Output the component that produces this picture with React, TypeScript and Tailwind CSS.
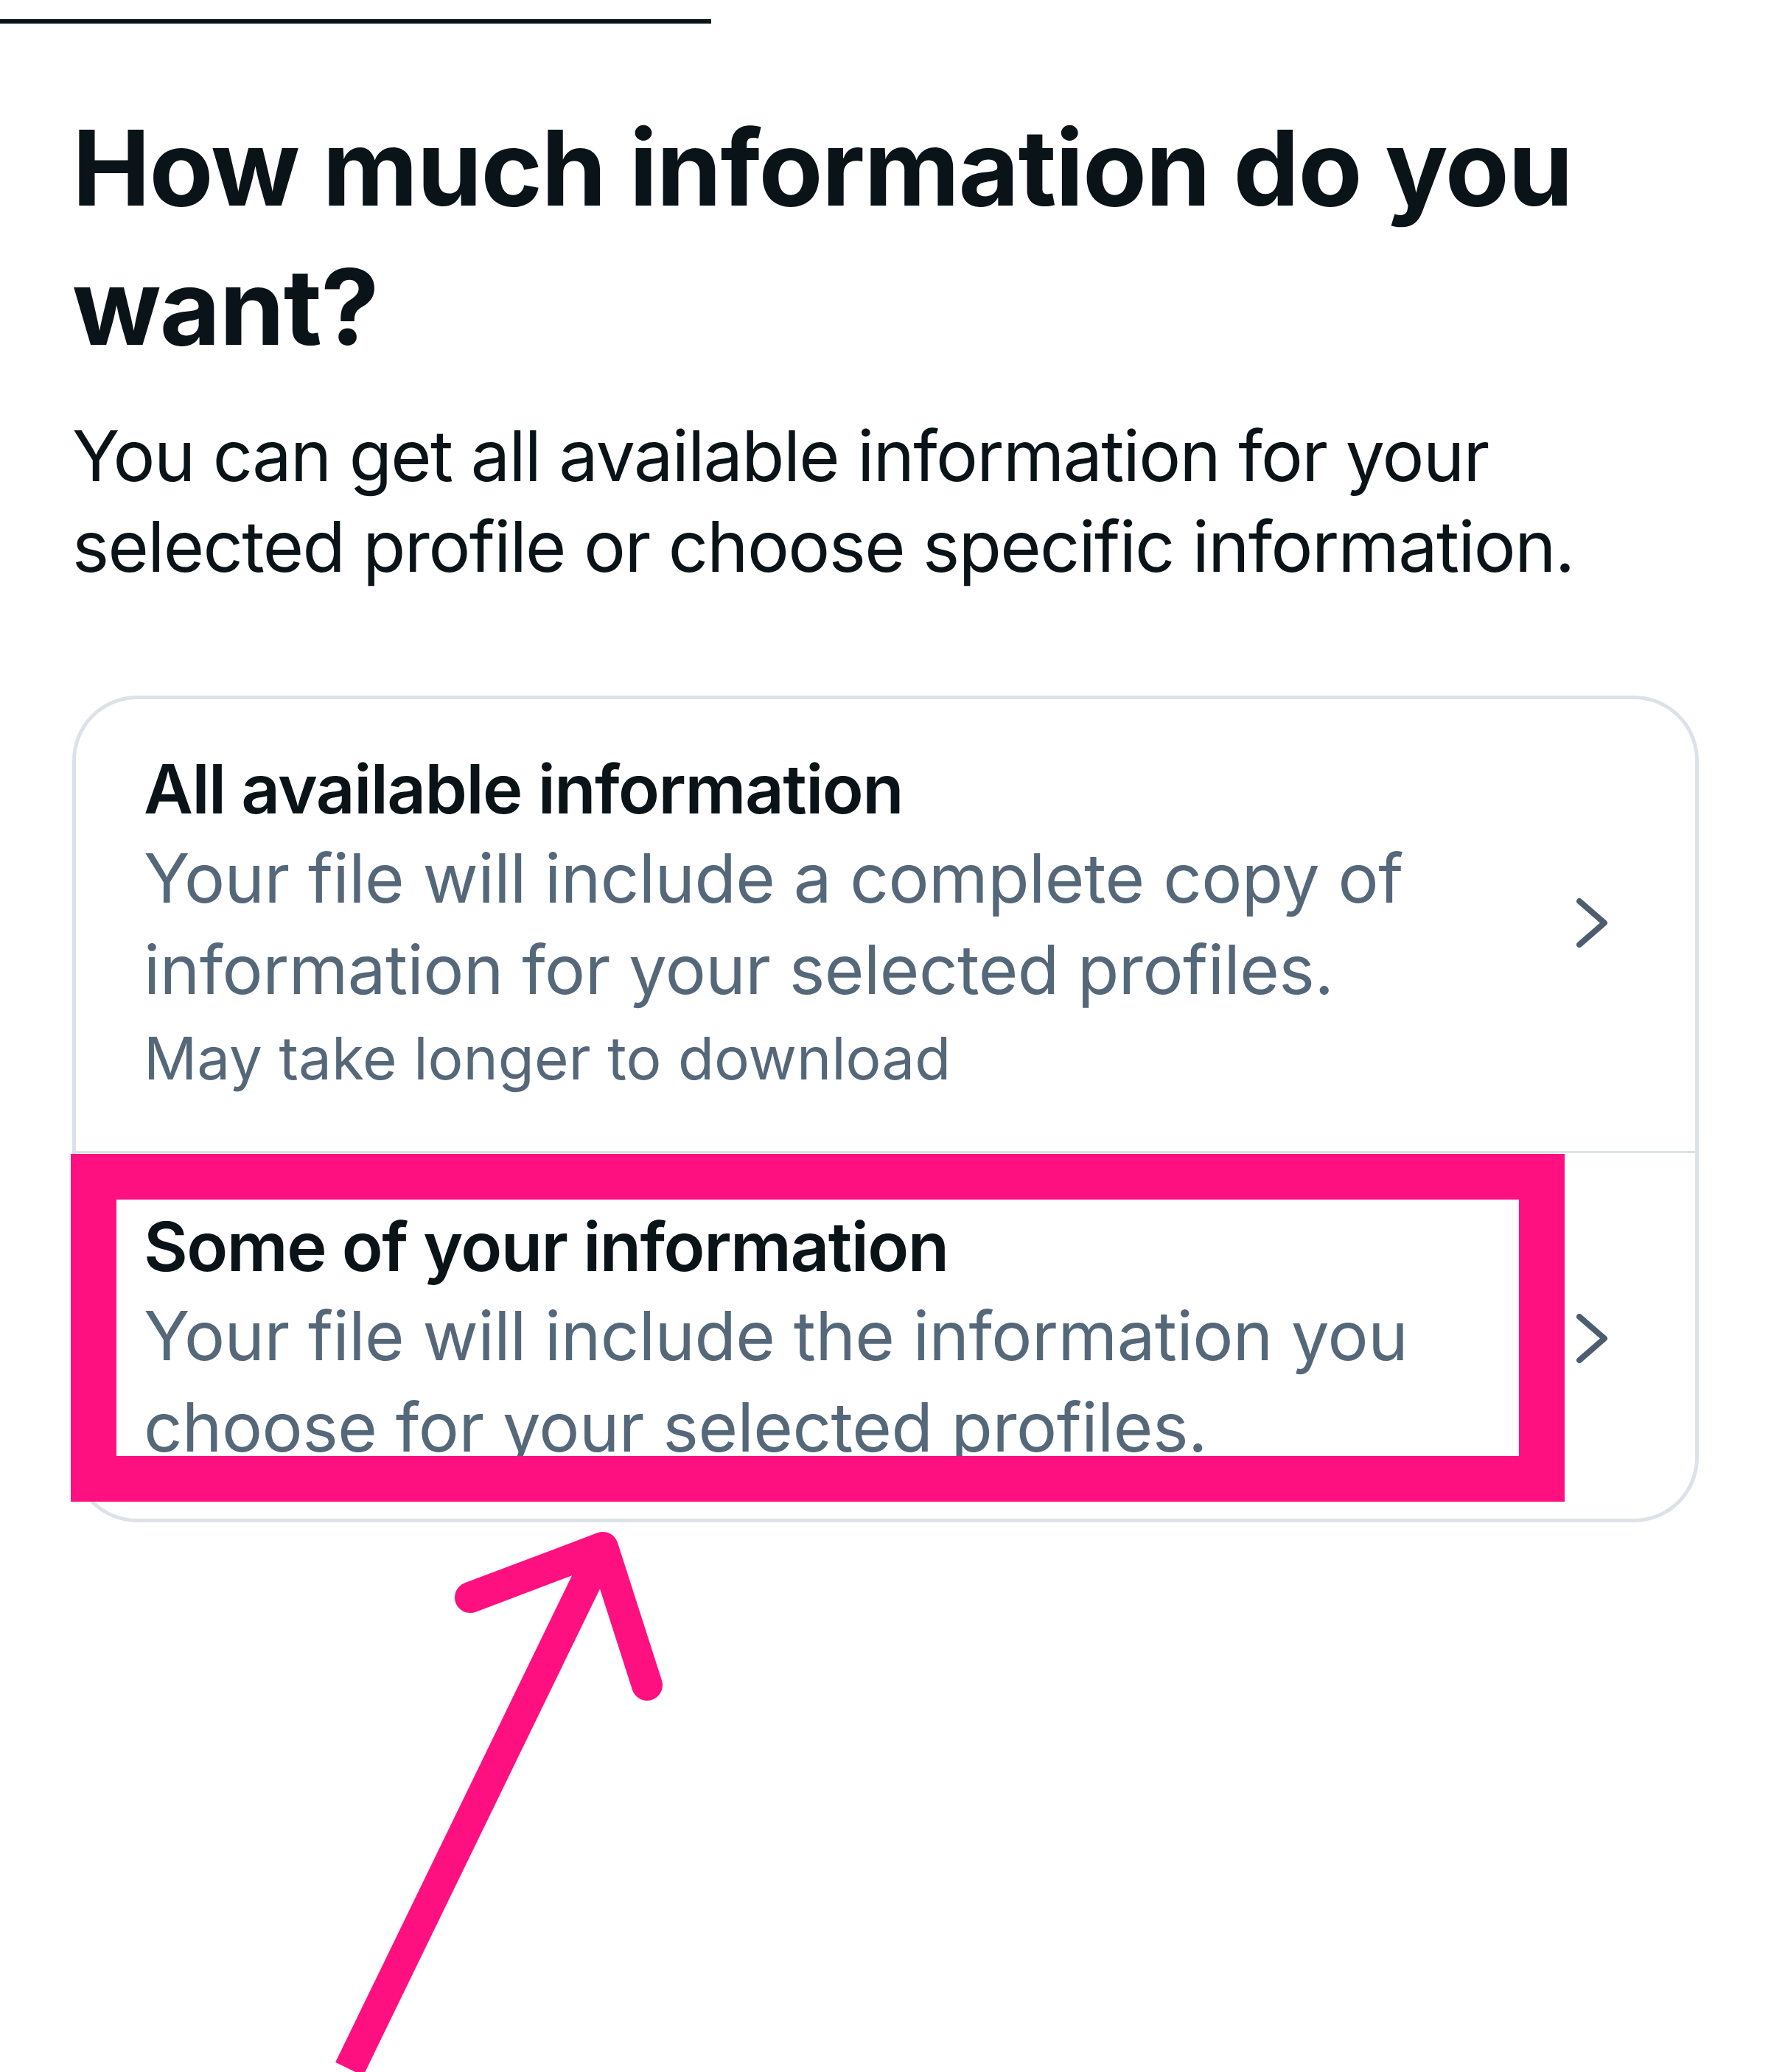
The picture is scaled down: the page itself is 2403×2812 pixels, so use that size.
import React from 'react';

interface Option {
  title: string;
  description: string;
  note?: string;
}

const options: Option[] = [
  {
    title: 'All available information',
    description:
      'Your file will include a complete copy of information for your selected profiles.',
    note: 'May take longer to download',
  },
  {
    title: 'Some of your information',
    description:
      'Your file will include the information you choose for your selected profiles.',
  },
];

function Chevron() {
  return (
    <svg width="44" height="67" viewBox="0 0 44 67" className="shrink-0">
      <polyline
        points="4,4 38,33.5 4,63"
        fill="none"
        stroke="#4c5d6f"
        strokeWidth="8"
        strokeLinecap="round"
        strokeLinejoin="round"
      />
    </svg>
  );
}

export default function App() {
  return (
    <div className="relative h-[2812px] w-[2403px] overflow-hidden bg-white font-['Inter','Liberation_Sans',sans-serif] text-[#0a1317]">
      {/* progress bar */}
      <div className="mt-[26px] h-[6px] w-[965px] bg-[#0a1317]" />

      <div className="px-[98px]">
        <h1 className="mt-[101px] text-[142px] leading-[189px] font-bold tracking-[-1.5px]">
          How much information do you want?
        </h1>
        <p className="mt-[46px] text-[95px] leading-[123px] tracking-[-1.6px]">
          You can get all available information for your selected profile or
          choose specific information.
        </p>

        <div className="mt-[141px] overflow-hidden rounded-[88px] border-[5px] border-[#dde2e9]">
          {options.map((option, index) => (
            <div
              key={option.title}
              className={
                index === 0
                  ? 'flex items-center gap-[82px] pt-[63px] pb-[69px] pl-[92px] pr-[117px]'
                  : 'flex items-center gap-[82px] border-t-[3px] border-[#dde2e9] pt-[68px] pb-[62px] pl-[92px] pr-[117px]'
              }
            >
              <div className="min-w-0 flex-1">
                <div className="text-[92px] leading-[118px] font-semibold tracking-[-1.5px]">
                  {option.title}
                </div>
                <div className="text-[92px] leading-[124px] tracking-[-0.5px] text-[#55687a]">
                  {option.description}
                </div>
                {option.note && (
                  <div className="text-[80px] leading-[115px] text-[#55687a]">
                    {option.note}
                  </div>
                )}
              </div>
              <Chevron />
            </div>
          ))}
        </div>
      </div>

      {/* annotation: highlight box */}
      <div className="pointer-events-none absolute left-[96px] top-[1566px] h-[472px] w-[2027px] border-[62px] border-[#ff1080]" />

      {/* annotation: arrow */}
      <svg
        className="pointer-events-none absolute left-0 top-0"
        width="2403"
        height="2812"
        viewBox="0 0 2403 2812"
      >
        <line
          x1="818"
          y1="2100"
          x2="474"
          y2="2808"
          stroke="#ff1080"
          strokeWidth="42"
        />
        <polyline
          points="638,2168 818,2100 878,2287"
          fill="none"
          stroke="#ff1080"
          strokeWidth="42"
          strokeLinecap="round"
          strokeLinejoin="round"
        />
      </svg>
    </div>
  );
}
